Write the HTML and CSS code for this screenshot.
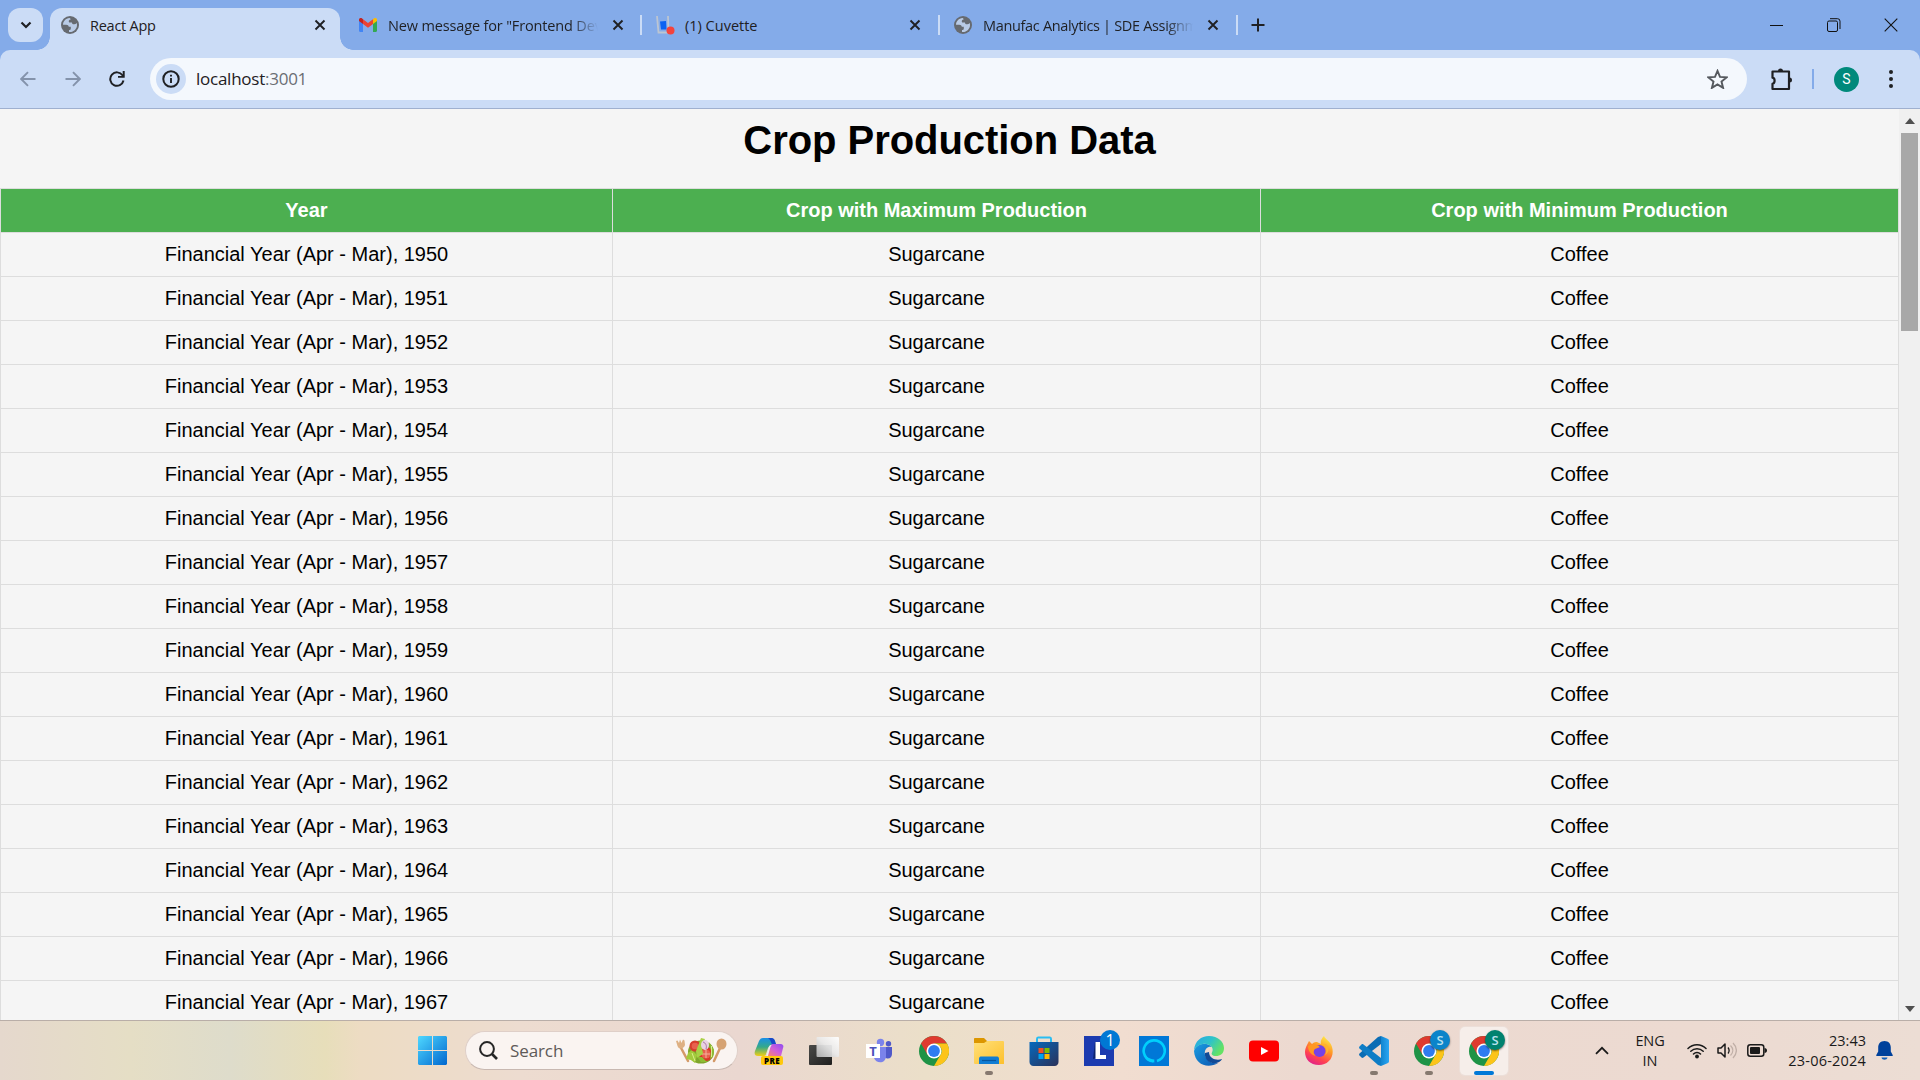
FILE: index.html
```html
<!DOCTYPE html>
<html lang="en">
<head>
<meta charset="utf-8">
<title>React App</title>
<link rel="stylesheet" href="styles.css">
</head>
<body>
<svg class="defs" width="0" height="0">
  <defs>
    <linearGradient id="gWin" x1="0" y1="0" x2="1" y2="1"><stop offset="0" stop-color="#4fd8ff"/><stop offset="1" stop-color="#0067cf"/></linearGradient>
    <linearGradient id="gCopA" x1="0" y1="0" x2="0" y2="1"><stop offset="0" stop-color="#1a8fe8"/><stop offset=".5" stop-color="#35a98a"/><stop offset="1" stop-color="#f2cf14"/></linearGradient>
    <linearGradient id="gCopB" x1="1" y1="0" x2="0" y2="1"><stop offset="0" stop-color="#8f4df0"/><stop offset=".5" stop-color="#d15fd8"/><stop offset="1" stop-color="#ff8a5c"/></linearGradient>
    <linearGradient id="gDark" x1="0" y1="0" x2="1" y2="1"><stop offset="0" stop-color="#4a4a48"/><stop offset="1" stop-color="#1f1f1e"/></linearGradient>
    <linearGradient id="gLight" x1="1" y1="0" x2="0" y2="1"><stop offset="0" stop-color="#ffffff"/><stop offset=".5" stop-color="#e9e9e9"/><stop offset="1" stop-color="#b5b5b5"/></linearGradient>
    <linearGradient id="gFolder" x1="0" y1="0" x2="1" y2="1"><stop offset="0" stop-color="#ffe07a"/><stop offset="1" stop-color="#fdc02c"/></linearGradient>
    <linearGradient id="gStore" x1="0" y1="0" x2="1" y2="1"><stop offset="0" stop-color="#0669bd"/><stop offset="1" stop-color="#2b3159"/></linearGradient>
    <linearGradient id="gEdgeT" x1="0" y1="0" x2="1" y2=".5"><stop offset="0" stop-color="#29a6e6"/><stop offset=".55" stop-color="#2fc3c9"/><stop offset="1" stop-color="#64e264"/></linearGradient>
    <linearGradient id="gEdgeB" x1="0" y1="0" x2="1" y2="1"><stop offset="0" stop-color="#1b9de2"/><stop offset="1" stop-color="#0b55b0"/></linearGradient>
    <linearGradient id="gFox" x1=".8" y1="0" x2=".3" y2="1"><stop offset="0" stop-color="#fff04a"/><stop offset=".4" stop-color="#ff9a26"/><stop offset=".75" stop-color="#ff4052"/><stop offset="1" stop-color="#e0218a"/></linearGradient>
    <linearGradient id="gCode" x1="0" y1="0" x2="1" y2="0"><stop offset="0" stop-color="#1284ce"/><stop offset="1" stop-color="#2aa6f4"/></linearGradient>
    <symbol id="globe" viewBox="0 0 18 18">
      <circle cx="9" cy="9" r="9" fill="#666a70"/>
      <path d="M8.500 2C4.800 2.300 2 5.300 2 8.800h3.200c1.600 0 2.400.8 2.600 2h2v2.300c-.2.700-.8 1-1.800 1V16c4.500.5 8-3 8-7 0-.7-.1-1.300-.3-1.900-.7.800-1.500 1.200-2.500 1.200-1.500 0-2.200-.7-2.300-1.900H8.200c-.5-.6-.6-1.300-.3-2 .3-.6 1-.9 1.700-.9.100-.6-.3-1.200-1.100-1.500z" fill="#b9cbe6"/>
    </symbol>
    <symbol id="cross" viewBox="0 0 12 12"><path d="M1.500 1.500l9 9M10.500 1.500l-9 9" stroke="#1f2023" stroke-width="1.900" fill="none"/></symbol>
    <symbol id="chrome" viewBox="0 0 30 30">
      <circle cx="15" cy="15" r="15" fill="#1e9346"/>
      <path d="M15 0a15 15 0 0 1 13 7.500H15L8.500 18.700 2 7.500A15 15 0 0 1 15 0z" fill="#df3a2f"/>
      <path d="M28 7.500A15 15 0 0 1 15 30l6.500-11.200A7.500 7.500 0 0 0 21.500 11L15 7.500z" fill="#fcc419"/>
      <circle cx="15" cy="15" r="7.500" fill="#fff"/><circle cx="15" cy="15" r="5.900" fill="#2f7cf0"/>
    </symbol>
  </defs>
</svg>
<div class="screen">
  <header class="tabstrip">
    <div class="tab-search"><svg width="12" height="8" viewBox="0 0 12 8"><path d="M1.500 1.500L6 6l4.500-4.500" fill="none" stroke="#1f2023" stroke-width="2.200"/></svg></div>
    <div class="tab tab-active">
      <svg class="fav" width="18" height="18"><use href="#globe"/></svg>
      <span class="tab-title t-react">React App</span>
      <svg class="close" width="12" height="12"><use href="#cross"/></svg>
    </div>
    <div class="tab tab-mail">
      <svg class="fav" width="18" height="14" viewBox="0 0 18 14"><path d="M0 2v10.800C0 13.500.5 14 1.200 14H4V5z" fill="#4285f4"/><path d="M18 2v10.800c0 .7-.5 1.200-1.200 1.200H14V5z" fill="#34a853"/><path d="M14 1.200V6l4-3V1.600C18 .2 16.300-.5 15.200.3z" fill="#fbbc04"/><path d="M4 6V1.200l5 3.700 5-3.700V6L9 9.800z" fill="#ea4335"/><path d="M0 1.600V3l4 3V1.200L2.800.3C1.700-.5 0 .2 0 1.600z" fill="#c5221f"/></svg>
      <span class="tab-title t-mail fade">New message for "Frontend Dev</span>
      <svg class="close" width="12" height="12"><use href="#cross"/></svg>
    </div>
    <i class="tab-sep"></i>
    <div class="tab tab-plain">
      <svg class="fav" width="19" height="20" viewBox="0 0 19 20"><path d="M1 1l1.500 16.500h10L12 1" fill="none" stroke="#bcc5d2" stroke-width="1.800"/><path d="M4 6.500l6-.5.500 8.500H5z" fill="#0b62f2"/><circle cx="14.500" cy="15.500" r="4" fill="#f4433c"/></svg>
      <span class="tab-title t-cuv">(1) Cuvette</span>
      <svg class="close" width="12" height="12"><use href="#cross"/></svg>
    </div>
    <i class="tab-sep"></i>
    <div class="tab tab-plain">
      <svg class="fav" width="18" height="18"><use href="#globe"/></svg>
      <span class="tab-title t-man fade">Manufac Analytics | SDE Assignm</span>
      <svg class="close" width="12" height="12"><use href="#cross"/></svg>
    </div>
    <i class="tab-sep"></i>
    <svg class="new-tab" width="14" height="14" viewBox="0 0 14 14"><path d="M7 .5v13M.5 7h13" stroke="#1f2023" stroke-width="2"/></svg>
    <div class="window-buttons">
      <svg width="14" height="14" viewBox="0 0 14 14"><path d="M0 7.500h13" stroke="#111"/></svg>
      <svg width="14" height="14" viewBox="0 0 14 14"><rect x=".5" y="3" width="10" height="10.500" rx="1.500" fill="none" stroke="#111"/><path d="M3 .7h7.500a2.500 2.500 0 0 1 2.500 2.500V11" fill="none" stroke="#111"/></svg>
      <svg width="14" height="14" viewBox="0 0 14 14"><path d="M.7.700l12.600 12.600M13.300.700L.7 13.300" stroke="#111" stroke-width="1.100"/></svg>
    </div>
  </header>

  <nav class="toolbar">
    <svg class="nav-ic" width="16" height="16" viewBox="0 0 16 16"><path d="M15.500 8H1.500M8 1.200L1.200 8 8 14.800" fill="none" stroke="#8493ab" stroke-width="1.900"/></svg>
    <svg class="nav-ic" width="16" height="16" viewBox="0 0 16 16"><path d="M.5 8h14M8 1.200L14.800 8 8 14.800" fill="none" stroke="#8493ab" stroke-width="1.900"/></svg>
    <svg class="nav-ic" width="16" height="16" viewBox="0 0 16 16"><path d="M14.500 9.500A6.700 6.700 0 1 1 13.500 4.300L14.600 5.600" fill="none" stroke="#1f2023" stroke-width="2"/><path d="M15.700 0v6.700H9V5h4.700V0z" fill="#1f2023"/></svg>
    <div class="omnibox">
      <span class="site-info"><svg width="18" height="18" viewBox="0 0 18 18"><circle cx="9" cy="9" r="7.700" fill="none" stroke="#1f2023" stroke-width="2"/><path d="M9 8v5M9 4.700v1.900" stroke="#1f2023" stroke-width="1.900"/></svg></span>
      <span class="url">localhost<span>:3001</span></span>
      <svg class="star" width="21" height="20" viewBox="0 0 21 20"><path d="M10.500 1.900l2.500 6 6.500.5-5 4.200 1.600 6.300-5.600-3.500-5.600 3.500 1.600-6.300-5-4.200 6.500-.5z" fill="none" stroke="#55595e" stroke-width="1.900"/></svg>
    </div>
    <svg class="puzzle" width="21" height="24" viewBox="0 0 21 24"><path d="M1.500 4.500H18v17.500H1.500v-5.200c2.800-.5 2.800-5.600 0-6.100z" fill="none" stroke="#1f2023" stroke-width="2.200" stroke-linejoin="round"/><path d="M7 4a2.500 2.500 0 0 1 5 0zM18.500 10.500a2.500 2.500 0 0 1 0 5z" fill="#1f2023"/></svg>
    <i class="bar-sep"></i>
    <span class="avatar">S</span>
    <svg class="dots" width="4" height="18" viewBox="0 0 4 18"><circle cx="2" cy="2" r="2"/><circle cx="2" cy="9" r="2"/><circle cx="2" cy="16" r="2"/></svg>
  </nav>

  <div class="viewport">
    <main class="page">
      <h1>Crop Production Data</h1>
      <table>
        <colgroup><col class="c-year"><col class="c-max"><col class="c-min"></colgroup>
        <thead><tr><th>Year</th><th>Crop with Maximum Production</th><th>Crop with Minimum Production</th></tr></thead>
        <tbody>
          <tr><td>Financial Year (Apr - Mar), 1950</td><td>Sugarcane</td><td>Coffee</td></tr>
          <tr><td>Financial Year (Apr - Mar), 1951</td><td>Sugarcane</td><td>Coffee</td></tr>
          <tr><td>Financial Year (Apr - Mar), 1952</td><td>Sugarcane</td><td>Coffee</td></tr>
          <tr><td>Financial Year (Apr - Mar), 1953</td><td>Sugarcane</td><td>Coffee</td></tr>
          <tr><td>Financial Year (Apr - Mar), 1954</td><td>Sugarcane</td><td>Coffee</td></tr>
          <tr><td>Financial Year (Apr - Mar), 1955</td><td>Sugarcane</td><td>Coffee</td></tr>
          <tr><td>Financial Year (Apr - Mar), 1956</td><td>Sugarcane</td><td>Coffee</td></tr>
          <tr><td>Financial Year (Apr - Mar), 1957</td><td>Sugarcane</td><td>Coffee</td></tr>
          <tr><td>Financial Year (Apr - Mar), 1958</td><td>Sugarcane</td><td>Coffee</td></tr>
          <tr><td>Financial Year (Apr - Mar), 1959</td><td>Sugarcane</td><td>Coffee</td></tr>
          <tr><td>Financial Year (Apr - Mar), 1960</td><td>Sugarcane</td><td>Coffee</td></tr>
          <tr><td>Financial Year (Apr - Mar), 1961</td><td>Sugarcane</td><td>Coffee</td></tr>
          <tr><td>Financial Year (Apr - Mar), 1962</td><td>Sugarcane</td><td>Coffee</td></tr>
          <tr><td>Financial Year (Apr - Mar), 1963</td><td>Sugarcane</td><td>Coffee</td></tr>
          <tr><td>Financial Year (Apr - Mar), 1964</td><td>Sugarcane</td><td>Coffee</td></tr>
          <tr><td>Financial Year (Apr - Mar), 1965</td><td>Sugarcane</td><td>Coffee</td></tr>
          <tr><td>Financial Year (Apr - Mar), 1966</td><td>Sugarcane</td><td>Coffee</td></tr>
          <tr><td>Financial Year (Apr - Mar), 1967</td><td>Sugarcane</td><td>Coffee</td></tr>
        </tbody>
      </table>
    </main>
    <aside class="scrollbar">
      <svg width="10" height="6" viewBox="0 0 10 6"><path d="M0 6l5-6 5 6z" fill="#505050"/></svg>
      <i class="thumb"></i>
      <svg class="down" width="10" height="6" viewBox="0 0 10 6"><path d="M0 0l5 6 5-6z" fill="#505050"/></svg>
    </aside>
  </div>

  <footer class="taskbar">
    <div class="start"><svg width="29" height="29" viewBox="0 0 29 29"><path d="M1 0h13v14H0V1zM15 0h13l1 1v13H15zM0 15h14v14H1l-1-1zM15 15h14v13l-1 1H15z" fill="url(#gWin)"/></svg></div>
    <div class="search">
      <svg width="19" height="19" viewBox="0 0 19 19"><circle cx="8" cy="8" r="6.900" fill="none" stroke="#262626" stroke-width="2"/><path d="M13 13l5 5" stroke="#262626" stroke-width="2.600"/></svg>
      <span>Search</span>
      <svg class="salad" width="52" height="28" viewBox="0 0 52 28">
        <path d="M5 9l8 15" stroke="#d49a68" stroke-width="2.500" stroke-linecap="round"/><path d="M1 4l1.500-.5L4 6l1-3.500L6.500 6 8 2.500l1.500 1L10 8c-1 4-6 5-7.500 1z" fill="#deb083"/>
        <path d="M46 9l-7 15" stroke="#d49a68" stroke-width="2.500" stroke-linecap="round"/><ellipse cx="46.500" cy="7" rx="5" ry="5.500" fill="#d6a272"/>
        <ellipse cx="26" cy="15" rx="13" ry="11.500" fill="#7fa52c"/><path d="M13 16l4-3 5 5-2 8-4-3-5-1z" fill="#a3ca3c"/>
        <circle cx="20" cy="9" r="5.500" fill="#d63c2c"/><circle cx="20" cy="9" r="3.300" fill="#e8604e"/><circle cx="31" cy="17" r="7" fill="#d93628"/><circle cx="31" cy="17" r="4.500" fill="#e8604e"/><path d="M27 17h8M31 13v8" stroke="#f4b09a"/>
        <path d="M21 14l5-13 4 1-3 7 1 8-6 4z" fill="#a9d045"/><ellipse cx="30" cy="8" rx="4" ry="5" fill="#e9d3e3"/><path d="M28 5c3 1 4 4 3 7" stroke="#a975a5" fill="none"/>
        <path d="M34 5l5 8-1 7-3 2 1-8zM22 20l4 5 6 0-5-5z" fill="#8fbd32"/><path d="M17 16l3 8M36.500 9v11" stroke="#d9ed8a"/>
      </svg>
    </div>
    <div class="apps">
      <div class="app"><svg width="30" height="30" viewBox="0 0 30 30"><path d="M9 2h8c2 0 3 1 4 4l1 3h-4c-2 0-3 1-4 3l-2 6c0 1-1 2-2 2H4c-3 0-4-2-3-5L5 5c1-2 2-3 4-3z" fill="url(#gCopA)"/><path d="M14 2h4c2 0 3 2 4 6h-4c-1-1-1-4-4-6z" fill="#1749c9"/><path d="M19 8h7c3 0 4 2 3 4l-2 8H12l4-9c1-2 1-3 3-3z" fill="url(#gCopB)"/><path d="M18 9c-1 0-2 3-4 11h-2l3-9c.5-1.500 1-2 3-2z" fill="#eee"/><rect x="7" y="20" width="22" height="9" rx="2" fill="#ffc90c"/><text x="18" y="27.600" text-anchor="middle" class="pre">PRE</text></svg></div>
      <div class="app"><svg width="30" height="30" viewBox="0 0 30 30"><rect x="0" y="9" width="23" height="20" rx="1" fill="url(#gDark)"/><rect x="7.500" y="1" width="22.500" height="20" rx="1" fill="url(#gLight)" opacity=".93"/></svg></div>
      <div class="app"><svg width="30" height="30" viewBox="0 0 30 30"><circle cx="16.500" cy="6.500" r="3.700" fill="#7b83eb"/><circle cx="24.500" cy="7.700" r="2.700" fill="#5059c9"/><path d="M20 11h8v7c0 3-2 5-5 4.500L20 21z" fill="#5059c9"/><path d="M10 11h12v9c0 8-10 8-12 2z" fill="#7b83eb"/><rect x="2" y="8" width="14" height="14" fill="#fff"/><text x="9" y="19.500" text-anchor="middle" class="teams">T</text></svg></div>
      <div class="app"><svg width="30" height="30"><use href="#chrome"/></svg></div>
      <div class="app running"><svg width="30" height="30" viewBox="0 0 30 30"><path d="M0 3c0-1 .5-1 1-1h9l3 3v5H0z" fill="#dc9600"/><path d="M0 7h10l3-2h16c1 0 1 1 1 1v21c0 1 0 1-1 1H1c-1 0-1-1-1-1z" fill="url(#gFolder)"/><path d="M5 28v-5c0-2 1-2.500 2.500-2.500h15c1.500 0 2.500.5 2.500 2.500v5z" fill="#117dd3"/><path d="M8 24.500h14" stroke="#07569e" stroke-width="1.200"/></svg></div>
      <div class="app"><svg width="30" height="30" viewBox="0 0 30 30"><path d="M8 7V3c0-1 0-1.500 1-1.500h12c1 0 1 .5 1 1.500v4" fill="none" stroke="#2abdf2" stroke-width="2"/><path d="M.5 6h29v20c0 2-1.500 4-4 4h-21c-2.500 0-4-2-4-4z" fill="url(#gStore)"/><path d="M9.500 12h5v5h-5z" fill="#f25022"/><path d="M15.500 12h5v5h-5z" fill="#7fba00"/><path d="M9.500 18h5v5h-5z" fill="#00a4ef"/><path d="M15.500 18h5v5h-5z" fill="#ffb900"/></svg></div>
      <div class="app"><svg width="30" height="30" viewBox="0 0 30 30"><path d="M0 0h30v30H0z" fill="#1c3bb0"/><path d="M11 6l-2 17 3-1V6z" fill="#0b2370"/><path d="M11.500 6h4.500v13h6v4H11.500z" fill="#fff"/></svg><b class="badge b-count">1</b></div>
      <div class="app"><svg width="30" height="30" viewBox="0 0 30 30"><path d="M0 0h30v30H0z" fill="#0078d7"/><path d="M14 25.300A10.500 10.500 0 1 1 18 25" fill="none" stroke="#00cffc" stroke-width="2.600"/><path d="M15.300 26.400v-3C10 23 8 21 5.500 18c1 5 4 8 9.800 8.400z" fill="#00cffc"/></svg></div>
      <div class="app"><svg width="30" height="30" viewBox="0 0 30 30"><path d="M0 15C2 8 12 5 18 11c-5-1-8 3-7 8 1 5 6 9 13 8C14 33 1 29 0 15z" fill="url(#gEdgeB)"/><path d="M11 17c-1 7 6 12 13 9.500 2-.5 4-3 4-3.500-5 2-13 0-13-7z" fill="#124a96"/><path d="M0 14C1 5 7 0 15 0c9 0 15 6 15 12 0 6-4 8-8 8-4 0-5-2-4-3.500C21 11 14 7 9 8c-4 .5-7 3-9 6z" fill="url(#gEdgeT)"/></svg></div>
      <div class="app"><svg width="30" height="30" viewBox="0 0 30 30"><rect x="0" y="4.500" width="30" height="21" rx="4" fill="#f00"/><path d="M12 11v8l7.500-4z" fill="#fff"/></svg></div>
      <div class="app"><svg width="30" height="30" viewBox="0 0 30 30"><path d="M5 5l3 3c2-2 4-2 5-2l4 2c-1-3 1-6 3-8 1 3 7 6 8 11 3 10-4 18-13 18C6 29 1 23 1 16c0-3 1-5 2-7z" fill="url(#gFox)"/><circle cx="15.500" cy="15" r="6" fill="#7541e6"/><path d="M4 10c4-2 8-2 12 1l-5 2c-2 2-2 5 1 7-5-1-8-5-8-10z" fill="#ff9822"/><path d="M17 9c5-1 7 6 4 10 4-2 5-8 1-11z" fill="#ffb22e"/></svg></div>
      <div class="app running"><svg width="30" height="30" viewBox="0 0 30 30"><path d="M22 0v8L4.500 21.500c-.8.600-1.500.5-2 0l-2-2c-.6-.7-.6-1.300 0-2L19 1z" fill="#0a6cb4"/><path d="M22 30v-8L4.500 8.500c-.8-.6-1.500-.5-2 0l-2 2c-.6.700-.6 1.300 0 2L19 29z" fill="#0e7dc6"/><path d="M22 0l6.500 2.800c1 .5 1.500 1 1.500 2v20.400c0 1-.5 1.500-1.500 2L22 30z" fill="url(#gCode)"/></svg></div>
      <div class="app running"><svg width="30" height="30"><use href="#chrome"/></svg><b class="badge b-blue">S</b></div>
      <div class="app active"><svg width="30" height="30"><use href="#chrome"/></svg><b class="badge b-green">S</b></div>
    </div>
    <div class="tray">
      <svg width="14" height="9" viewBox="0 0 14 9"><path d="M1 7.800l6-6 6 6" fill="none" stroke="#1a1a1a" stroke-width="1.800"/></svg>
      <div class="lang"><span>ENG</span><span>IN</span></div>
      <div class="status">
        <svg width="20" height="16" viewBox="0 0 20 16"><g fill="none" stroke="#1a1a1a" stroke-width="1.500" stroke-linecap="round"><path d="M1 5.500c5-5 13-5 18 0M3.800 8.300c3.500-3.300 8.900-3.300 12.400 0M6.500 11c2-1.900 5-1.900 7 0"/></g><circle cx="10" cy="13.500" r="1.900" fill="#1a1a1a"/></svg>
        <svg width="20" height="17" viewBox="0 0 20 17"><path d="M1 6h3l4-4v13l-4-4H1z" fill="none" stroke="#1a1a1a" stroke-width="1.500" stroke-linejoin="round"/><path d="M11 5.500c1.500 2 1.500 4 0 6" fill="none" stroke="#1a1a1a" stroke-width="1.300"/><path d="M13.500 3.500c3 3 3 7 0 10M16 1c4.500 4.500 4.500 10.500 0 15" fill="none" stroke="#c0afa7" stroke-width="1.300"/></svg>
        <svg width="20" height="13" viewBox="0 0 20 13"><rect x=".8" y=".8" width="16" height="11.400" rx="2.500" fill="none" stroke="#1a1a1a" stroke-width="1.500"/><rect x="3" y="3" width="10" height="7" rx="1" fill="#1a1a1a"/><path d="M17.500 4c1.500 0 2.500 1 2.500 2.500S19 9 17.500 9z" fill="#1a1a1a"/></svg>
      </div>
      <div class="clock"><span>23:43</span><span class="date">23-06-2024</span></div>
      <svg class="bell" width="17" height="19" viewBox="0 0 17 19"><path d="M8.500 0c4 0 6.300 2.800 6.300 6.500v4l1.900 3.500v1H.3v-1l1.900-3.500v-4C2.200 2.800 4.500 0 8.500 0z" fill="#00419b"/><path d="M5.500 16.500h6c-.5 3-5.500 3-6 0z" fill="#1560b8"/></svg>
    </div>
  </footer>
</div>
</body>
</html>
```
FILE: styles.css
```css
* { box-sizing: border-box; }
body { margin: 0; overflow: hidden; }
svg { display: block; flex: none; }
.defs { position: absolute; }
.screen { width: 1920px; height: 1080px; display: flex; flex-direction: column; overflow: hidden; background: #84abe9; font-family: "Open Sans", "Noto Sans", sans-serif; color: #1f2023; }

/* Tabs */
.tabstrip { height: 50px; flex: none; display: flex; align-items: center; background: #84abe9; padding-left: 8px; }
.tab-search { width: 35px; height: 34px; margin-right: 7px; border-radius: 12px; background: #cbdcf6; display: flex; align-items: center; justify-content: center; }
.tab { display: flex; align-items: center; flex: none; height: 42px; }
.tab-active { position: relative; width: 290px; margin-top: 8px; padding: 0 14px 8px 11px; background: #cbdcf6; border-radius: 12px 12px 0 0; }
.tab-active::before, .tab-active::after { content: ""; position: absolute; bottom: 0; width: 13px; height: 13px; }
.tab-active::before { left: -13px; background: radial-gradient(circle at 0 0, transparent 12.500px, #cbdcf6 13px); }
.tab-active::after { right: -13px; background: radial-gradient(circle at 100% 0, transparent 12.500px, #cbdcf6 13px); }
.tab-mail { width: 300px; padding: 0 16px 0 19px; }
.tab-plain { width: 296px; padding: 0 17px 0 14px; }
.fav { margin-right: 11px; }
.tab-title { padding-top: 1px; font-size: 14.500px; line-height: 20px; white-space: nowrap; }
.t-react { letter-spacing: -.25px; }
.t-mail, .t-man { width: 212px; overflow: hidden; }
.t-mail { letter-spacing: -.15px; }
.t-man { letter-spacing: -.33px; }
.t-cuv { margin-left: -1px; }
.fade { -webkit-mask-image: linear-gradient(90deg, #000 86%, transparent 99%); mask-image: linear-gradient(90deg, #000 86%, transparent 99%); }
.close { margin-left: auto; }
.tab-sep { width: 2px; height: 20px; flex: none; background: #cbdcf6; }
.new-tab { margin-left: 13px; }
.window-buttons { margin: 0 22px 0 auto; display: flex; gap: 43px; }

/* Toolbar */
.toolbar { height: 59px; flex: none; display: flex; align-items: center; padding-left: 20px; background: #cbdcf6; border-bottom: 1px solid #9fb0cf; border-radius: 10px 10px 0 0; }
.nav-ic { margin-right: 28.500px; }
.nav-ic:nth-child(3) { margin-right: 25px; }
.omnibox { width: 1597px; height: 42px; display: flex; align-items: center; border-radius: 21px; background: #f4f8fd; padding: 0 19px 0 6px; }
.site-info { width: 30px; height: 30px; border-radius: 50%; background: #cbdcf6; display: flex; align-items: center; justify-content: center; }
.url { margin-left: 10px; font-size: 17px; line-height: 24px; letter-spacing: -.25px; }
.url span { color: #6a6e74; }
.star { margin-left: auto; }
.puzzle { margin-left: 24px; }
.bar-sep { width: 2px; height: 20px; margin-left: 20px; background: #84abe9; }
.avatar { width: 25px; height: 25px; margin-left: 20px; border-radius: 50%; background: #00897b; color: #fff; font: 14px/25px Roboto, sans-serif; text-align: center; }
.dots { margin-left: 30px; fill: #1f2023; }

/* Page */
.viewport { flex: 1; min-height: 0; display: flex; background: #f5f5f5; overflow: hidden; }
.page { width: 1899px; overflow: hidden; font-family: "Liberation Sans", Arial, sans-serif; color: #000; }
h1 { margin: 8px 0 25px; height: 46px; font-size: 40px; line-height: 46px; letter-spacing: -.05px; text-align: center; }
table { width: 1899px; table-layout: fixed; border-spacing: 0; border: solid #ddd; border-width: 1px 0 0 1px; font-size: 20px; text-align: center; }
.c-year { width: 612px; }
.c-max { width: 648px; }
.c-min { width: 638px; }
th, td { height: 44px; padding: 0; line-height: 23px; border: solid #ddd; border-width: 0 1px 1px 0; }
th { background: #4caf50; color: #fff; }
.scrollbar { width: 21px; background: #f0f0f0; display: flex; flex-direction: column; align-items: center; padding: 9px 0 8px; }
.thumb { width: 17px; height: 198px; margin-top: 9px; background: #a8a8a8; }
.down { margin-top: auto; }

/* Taskbar */
.taskbar { height: 60px; flex: none; display: flex; align-items: center; border-top: 1px solid #b9aea8; background: linear-gradient(90deg, #e5d8cd 0, #e5dec5 130px, #dedccb 230px, #e7deba 325px, #eddcc3 360px, #eddcd0 520px, #ead7d0 740px, #ebdfc9 925px, #f1ddd0 1120px, #ecd9d0 1300px, #ecdad1 1700px, #ecddd4 1920px); }
.start { margin-left: 418px; }
.search { width: 273px; height: 39px; margin-left: 18px; margin-right: 3.500px; padding: 0 10px 0 13px; display: flex; align-items: center; border-radius: 20px; background: #faf4f1; border: 1px solid #dfcfc8; border-bottom-color: #c8b8b1; }
.search span { margin-left: 12px; font-size: 17px; line-height: 24px; color: #5e5a58; letter-spacing: -.1px; }
.salad { margin-left: auto; }
.apps { display: flex; }
.app { position: relative; width: 55px; height: 48px; display: flex; align-items: center; justify-content: center; }
.running::after, .active::after { content: ""; position: absolute; bottom: 0; left: 23.500px; width: 8px; height: 4px; border-radius: 2px; background: #86796f; }
.active { width: 48px; margin-left: 3.500px; border-radius: 5px; background: #f6eeea; box-shadow: 0 0 0 1px #ecdfd9; }
.active::after { left: 14px; width: 20px; background: #0078d7; }
.badge { position: absolute; top: 3px; left: 28.500px; width: 20px; height: 20px; border-radius: 50%; color: #fff; font: 16px/20px "Open Sans", sans-serif; text-align: center; }
.b-count { background: #0078d4; }
.b-blue, .b-green { font-size: 13px; font-weight: 600; color: #b9e0ee; box-shadow: 0 1px 2px #0008; }
.b-blue { background: #0b84ca; }
.b-green { left: 25px; background: #00826f; }
.pre { font: 800 8px "Open Sans", sans-serif; letter-spacing: .3px; }
.teams { font: 700 13px "Open Sans", sans-serif; fill: #4b53bc; }
.tray { margin-left: auto; display: flex; align-items: center; padding-right: 27px; color: #1a1a1a; font-size: 14.500px; }
.lang { width: 40px; margin-left: 21px; display: flex; flex-direction: column; text-align: center; line-height: 20px; letter-spacing: -.1px; }
.status { display: flex; align-items: center; gap: 10px; margin-left: 17px; }
.clock { width: 79px; margin-left: 20px; display: flex; flex-direction: column; align-items: flex-end; line-height: 20px; white-space: nowrap; }
.date { letter-spacing: .2px; }
.bell { margin-left: 10px; }
```
